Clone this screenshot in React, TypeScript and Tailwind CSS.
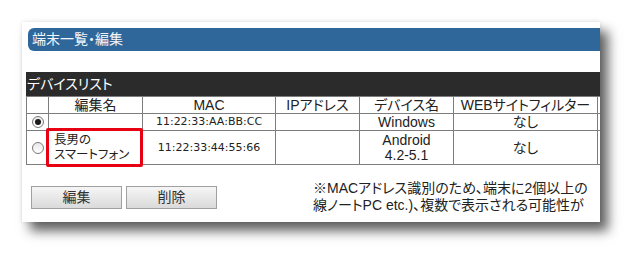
import React from "react";

const ff = "[font-family:'Liberation_Sans','Noto_Sans_CJK_JP',sans-serif]";

function Radio({ checked }: { checked?: boolean }) {
  return (
    <span className="inline-flex h-[12px] w-[12px] items-center justify-center rounded-full border border-[#7a7a7a] bg-gradient-to-b from-[#e8e8e8] to-white align-middle">
      {checked && <span className="h-[6px] w-[6px] rounded-full bg-[#1a1a1a]" />}
    </span>
  );
}

export default function App() {
  const base = "border border-[#7d7d7d] p-0 text-center text-[#222]";
  const th = `${base} font-normal text-[14px] leading-[16px]`;
  const td = `${base} text-[14px] leading-[16px]`;
  const mac = `${base} [font-family:'DejaVu_Sans',sans-serif] text-[11px] leading-[14px]`;
  return (
    <div className={`min-h-[264px] w-[642px] bg-white pl-[22px] pt-[22px] ${ff} [font-feature-settings:'palt']`}>
      <div className="relative h-[200px] w-[578px] overflow-hidden bg-white shadow-[8px_9px_11px_rgba(0,0,0,0.62),0_0_4px_rgba(0,0,0,0.12)]">
        <div className="ml-[6px] mt-[6px] flex h-[23px] items-center rounded-l-[6px] bg-[#30679b] pl-[4px] text-[14px] text-[#f2f6fa]">
          端末一覧・編集
        </div>
        <div className="ml-[4px] mt-[21px] flex h-[24px] items-center bg-[#2b2b2b] pl-[1px] text-[14px] text-white">
          デバイスリスト
        </div>
        <table className="ml-[4px] w-[611px] table-fixed border-collapse">
          <colgroup>
            <col className="w-[22px]" />
            <col className="w-[94px]" />
            <col className="w-[133px]" />
            <col className="w-[84px]" />
            <col className="w-[94px]" />
            <col className="w-[144px]" />
            <col className="w-[40px]" />
          </colgroup>
          <thead>
            <tr className="h-[17px]">
              <th className={th}></th>
              <th className={th}>編集名</th>
              <th className={th}>MAC</th>
              <th className={th}>IPアドレス</th>
              <th className={th}>デバイス名</th>
              <th className={`${th} whitespace-nowrap`}>WEBサイトフィルター</th>
              <th className={th}></th>
            </tr>
          </thead>
          <tbody>
            <tr className="h-[17px]">
              <td className={td}>
                <div className="flex items-center justify-center"><Radio checked /></div>
              </td>
              <td className={td}></td>
              <td className={mac}>11:22:33:AA:BB:CC</td>
              <td className={td}></td>
              <td className={td}>Windows</td>
              <td className={td}>なし</td>
              <td className={td}></td>
            </tr>
            <tr className="h-[34px]">
              <td className={td}>
                <div className="flex items-center justify-center"><Radio /></div>
              </td>
              <td className={`${base} pl-[5px] text-left text-[12.5px] leading-[15px]`}>
                長男の
                <br />
                スマートフォン
              </td>
              <td className={mac}>11:22:33:44:55:66</td>
              <td className={td}></td>
              <td className={`${base} text-[14px] leading-[15px]`}>
                Android
                <br />
                4.2-5.1
              </td>
              <td className={td}>なし</td>
              <td className={td}></td>
            </tr>
          </tbody>
        </table>
        <div className="flex items-start">
          <div className="ml-[9px] mt-[21px] flex gap-[4px]">
            <button className="h-[23px] w-[91px] border border-[#a0a0a0] bg-gradient-to-b from-[#f6f6f6] to-[#dadada] text-[14px] text-[#333]">
              編集
            </button>
            <button className="h-[23px] w-[91px] border border-[#a0a0a0] bg-gradient-to-b from-[#f6f6f6] to-[#dadada] text-[14px] text-[#333]">
              削除
            </button>
          </div>
          <div className="ml-[96px] mt-[15px] whitespace-nowrap text-[14px] leading-[17px] text-[#222]">
            ※MACアドレス識別のため、端末に2個以上の
            <br />
            線ノートPC etc.)、複数で表示される可能性が
          </div>
        </div>
        <div className="pointer-events-none absolute left-[24px] top-[106px] h-[39px] w-[97px] rounded-[2px] border-[3px] border-[#e60012]" />
      </div>
    </div>
  );
}
